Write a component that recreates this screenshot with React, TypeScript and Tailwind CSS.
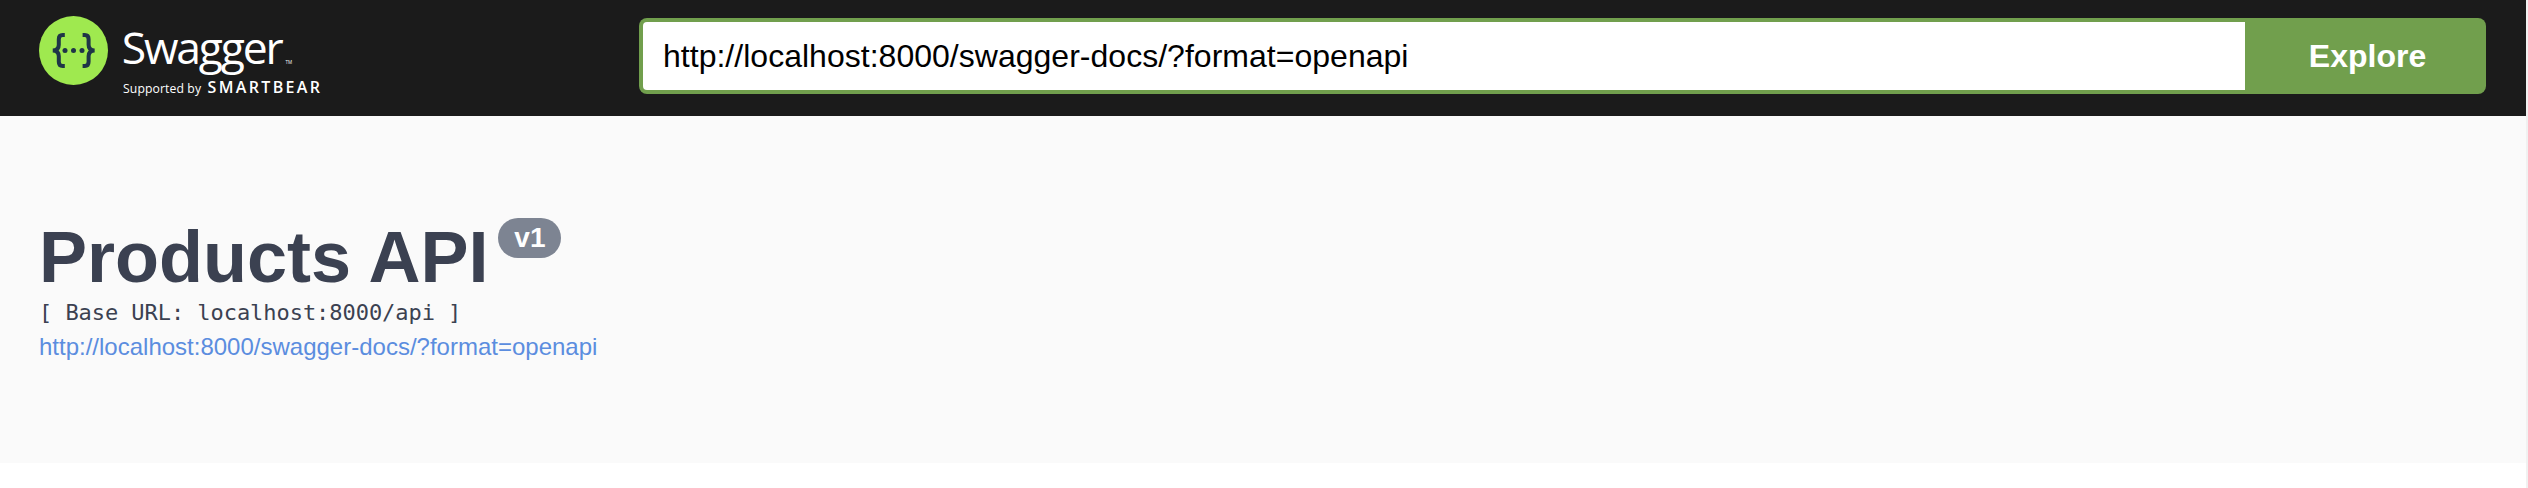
export default function App() {
  return (
    <div className="flex h-[488px] w-[2528px] bg-white font-['Liberation_Sans',Arial,sans-serif]">
      <div className="flex w-[2526px] flex-col">
        <header className="flex h-[116px] items-start bg-[#1b1b1b] pl-[39px]">
          <svg className="h-[116px] w-[600px] shrink-0" viewBox="39 0 600 116" aria-label="Swagger">
            <circle cx="73.5" cy="50.5" r="34.5" fill="#9fe94f" />
            <g fill="none" stroke="#1f3547" strokeWidth="4">
              <path d="M64.8 35h-2.2q-3.8 0-3.8 4.2v5.5q0 5.6-6 5.8q6 .2 6 5.8v5.5q0 4.2 3.8 4.2h2.2" />
              <path d="M82.6 35h2.2q3.8 0 3.8 4.2v5.5q0 5.6 6 5.8q-6 .2-6 5.8v5.5q0 4.2-3.8 4.2h-2.2" />
            </g>
            <g fill="#1f3547">
              <circle cx="65" cy="50.5" r="2.5" />
              <circle cx="73.5" cy="50.5" r="2.5" />
              <circle cx="82" cy="50.5" r="2.5" />
            </g>
            <g fill="#fff" fontFamily="'Open Sans', 'Noto Sans', sans-serif">
              <text x="121.8" y="64" fontSize="44.5" fontWeight="390" textLength="162" lengthAdjust="spacing">Swagger</text>
              <text x="285.5" y="64" fontSize="4.5" textLength="6.5">TM</text>
              <text x="123" y="92.5" fontSize="12.2" textLength="78">Supported by</text>
              <text x="207.5" y="92.5" fontSize="16" fontWeight="600" textLength="112.5">SMARTBEAR</text>
            </g>
          </svg>
          <div className="mt-[18px] flex h-[76px] w-[1847px] overflow-hidden rounded-lg bg-[#719f4d] py-1 pl-1">
            <div className="flex w-[1602px] items-center rounded-l-[4px] bg-white pl-5 text-[32px] leading-[36px] tracking-[0.02px] text-black">
              http://localhost:8000/swagger-docs/?format=openapi
            </div>
            <button className="flex-1 pl-[4px] text-[32px] leading-[36px] font-bold text-white">Explore</button>
          </div>
        </header>
        <main className="h-[347px] bg-[#fafafa] pt-[99px] pl-[39px] text-[#3b4151]">
          <div className="flex h-[84px] items-start">
            <h1 className="text-[72px] leading-[84px] font-bold">Products API</h1>
            <span className="mt-[3px] ml-[10px] flex h-10 w-[63px] items-center justify-center rounded-full bg-[#7d8492] text-[28px] leading-none font-bold text-white">v1</span>
          </div>
          <pre className="h-[34px] font-['DejaVu_Sans_Mono',monospace] text-[22px] leading-[28px] tracking-[-0.05px]">[ Base URL: localhost:8000/api ]</pre>
          <a className="block text-[24px] leading-[28px] text-[#5b8ddf]">http://localhost:8000/swagger-docs/?format=openapi</a>
        </main>
      </div>
      <div className="w-[2px] bg-[#f1f1f1]" />
    </div>
  );
}
